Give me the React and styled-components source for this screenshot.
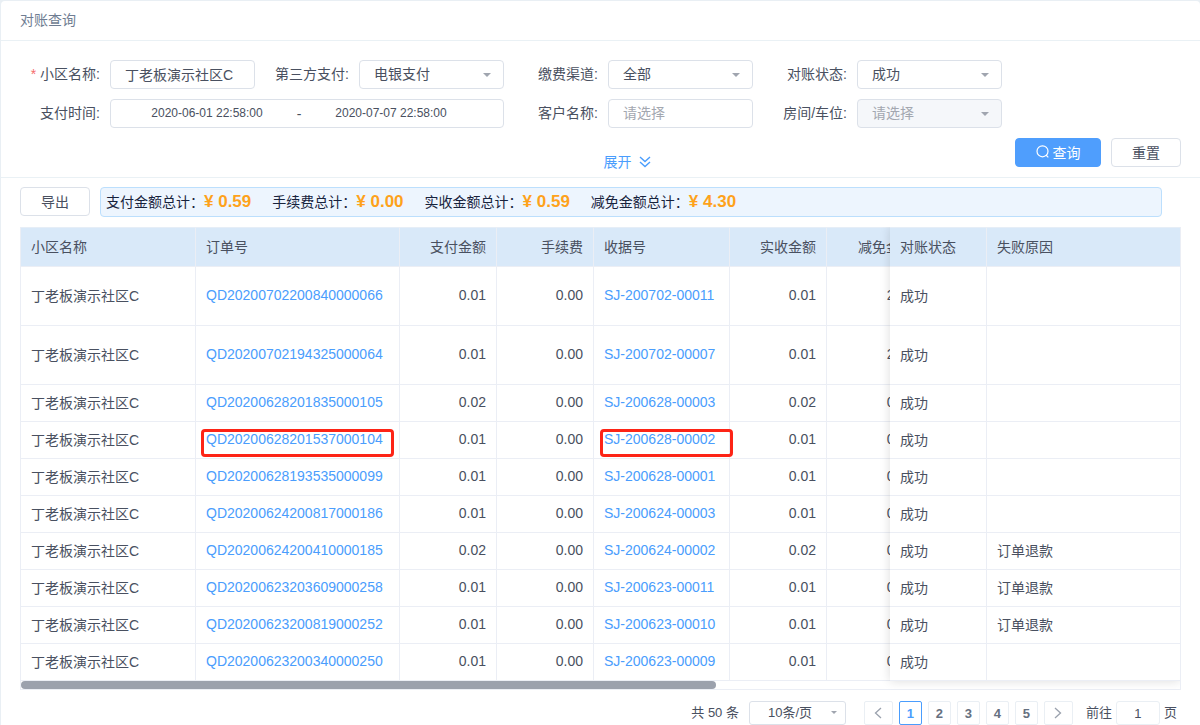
import React from "react";
import styled, { createGlobalStyle, css } from "styled-components";

const Global = createGlobalStyle`
  *, *::before, *::after { box-sizing: border-box; }
  body { margin: 0; background: #e9eff4; }
  body, button, input, select {
    font-family: "Liberation Sans", "Noto Sans CJK SC", sans-serif;
    font-size: 14px;
    color: #495060;
  }
`;

const Card = styled.main`
  margin: 1px 0 0 1px;
  min-height: calc(100vh - 1px);
  background: #fff;
  border-radius: 4px 4px 0 0;
`;

const Header = styled.header`
  height: 40px;
  padding: 0 19px;
  border-bottom: 1px solid #eaf1f5;
`;

const Title = styled.h1`
  margin: 0;
  font-size: 14px;
  font-weight: 400;
  line-height: 38px;
  color: #6f7d92;
`;

const Form = styled.form`
  display: grid;
  gap: 10px;
  padding: 19px 19px 10px 20px;
  border-bottom: 1px solid #eaf1f5;
`;

const Fields = styled.div`
  display: grid;
  grid-template-columns: 234fr 249fr 249fr 249fr 179fr;
  row-gap: 10px;
`;

const Field = styled.div`
  display: flex;
  align-items: center;
  gap: 10px;
  min-width: 0;
  grid-column: span ${(p) => p.$span || 1};
`;

const Label = styled.label`
  flex: none;
  width: ${(p) => (p.$first ? 79 : 94)}px;
  text-align: right;
  line-height: 29px;
  white-space: nowrap;
`;

const Required = styled.span`
  color: #f56c6c;
`;

const controlBox = css`
  height: 29px;
  border: 1px solid #dce1e9;
  border-radius: 4px;
  background: #fff;
`;

const TextInput = styled.input`
  ${controlBox}
  flex: 1;
  width: 100%;
  min-width: 0;
  padding: 0 14px 2px;
  outline: none;
  &::placeholder { color: #a3a7b0; }
`;

const SelectBox = styled.span`
  position: relative;
  display: flex;
  flex: ${(p) => (p.$width ? "none" : 1)};
  width: ${(p) => (p.$width ? p.$width + "px" : "auto")};
  min-width: 0;
`;

const SelectInput = styled.select`
  ${controlBox}
  appearance: none;
  width: 100%;
  padding: 0 24px 1px 14px;
  outline: none;
  opacity: 1;
  ${(p) => p.$small && css`
    height: 24px;
    padding: 0 24px 2px 18px;
    border-radius: 3px;
    font-size: 13px;
  `}
  &:disabled { background: #f5f7fa; color: #a3a7b0; }
`;

const Caret = styled.svg`
  position: absolute;
  right: ${(p) => (p.$small ? 9 : 13)}px;
  top: calc(50% - 2px);
  width: ${(p) => (p.$small ? 6 : 8)}px;
  height: ${(p) => (p.$small ? 3 : 4)}px;
  fill: #a0a5af;
  pointer-events: none;
`;

const DateRange = styled.div`
  ${controlBox}
  flex: 1;
  display: flex;
  align-items: center;
  min-width: 0;
  padding: 0 37px 0 21px;
`;

const DateInput = styled.input`
  flex: 1;
  min-width: 0;
  width: 0;
  padding: 0 0 1px;
  border: 0;
  outline: none;
  background: none;
  font-size: 12px;
  text-align: center;
`;

const Dash = styled.span`
  width: 34px;
  text-align: center;
`;

const FormFooter = styled.div`
  display: grid;
  grid-template-columns: 11fr auto 10fr;
`;

const Expand = styled.button`
  grid-column: 2;
  align-self: end;
  display: flex;
  align-items: center;
  gap: 8px;
  padding: 0;
  border: 0;
  background: none;
  color: #4a9dfd;
  line-height: 20px;
  margin-bottom: -5px;
`;

const Buttons = styled.div`
  display: flex;
  justify-content: flex-end;
  gap: 10px;
`;

const Button = styled.button`
  ${controlBox}
  display: flex;
  flex: none;
  align-items: center;
  justify-content: center;
  gap: 4px;
  width: ${(p) => (p.$primary ? 86 : 70)}px;
  padding: 0 0 2px;
  ${(p) => p.$primary && css`
    color: #fff;
    background: #4f9efd;
    border-color: #4f9efd;
  `}
`;

const Toolbar = styled.div`
  display: flex;
  gap: 10px;
  padding: 9px 38px 10px 19px;
`;

const Summary = styled.dl`
  flex: 1;
  display: flex;
  gap: 21px;
  height: 30px;
  margin: 0;
  padding: 0 5px;
  border: 1px solid #bcdffd;
  border-radius: 4px;
  background: #edf5fe;
  line-height: 28px;
  white-space: nowrap;
`;

const Total = styled.div`
  display: flex;
`;

const TotalName = styled.dt`
  color: #17233d;
  line-height: 29px;
`;

const TotalValue = styled.dd`
  margin: 0;
  font-size: 17px;
  font-weight: 700;
  color: #fea21b;
`;

const TableFrame = styled.section`
  margin: 0 19px;
  border: 1px solid #ebeef5;
  border-top: 0;
`;

const Panes = styled.div`
  display: flex;
`;

const ScrollPane = styled.div`
  flex: 1;
  min-width: 0;
  overflow: hidden;
`;

const FixedPane = styled.div`
  position: relative;
  flex: none;
  width: 290px;
  background: #fff;
  box-shadow: 0 0 10px rgba(0, 0, 0, 0.14);
  clip-path: inset(0 0 -9px -10px);
`;

const Table = styled.table`
  width: ${(p) => p.$width};
  table-layout: fixed;
  border-collapse: separate;
  border-spacing: 0;
`;

const cell = css`
  padding: 0 10px 2px;
  border-right: 1px solid #ebeef5;
  border-bottom: 1px solid #ebeef5;
  text-align: ${(p) => (p.$right ? "right" : "left")};
  white-space: nowrap;
  &:last-child { border-right: 0; }
`;

const Th = styled.th`
  ${cell}
  height: 40px;
  background: #d9e9f9;
  border-top: 1px solid #e6eef7;
  font-weight: 400;
`;

const Td = styled.td`
  ${cell}
  position: relative;
  height: ${(p) => (p.$tall ? 59 : 37)}px;
`;

const CellLink = styled.a`
  color: #4a9dfd;
  text-decoration: none;
`;

const Mark = styled.span`
  position: absolute;
  top: 7px;
  left: ${(p) => (p.$wide ? 6 : 5)}px;
  right: ${(p) => (p.$wide ? -4 : 5)}px;
  height: 28px;
  border: 3px solid #fd2416;
  border-radius: 4px;
  pointer-events: none;
`;

const ScrollTrack = styled.div`
  height: 8px;
`;

const ScrollThumb = styled.div`
  width: 60%;
  height: 8px;
  border-radius: 4px;
  background: #9ba1ad;
`;

const Pagination = styled.nav`
  display: flex;
  justify-content: flex-end;
  align-items: center;
  gap: 6px;
  padding: 11px 23px 0;
  font-size: 13px;
  line-height: 24px;
  white-space: nowrap;
`;

const Count = styled.span`
  margin-right: 4px;
`;

const PageButton = styled.button`
  display: flex;
  align-items: center;
  justify-content: center;
  width: ${(p) => (p.$arrow ? 29 : 23)}px;
  height: 24px;
  padding: 0;
  border: 1px solid ${(p) => (p.$active ? "#4a9dfd" : "#eaeff4")};
  border-radius: 2px;
  background: #fff;
  color: ${(p) => (p.$active ? "#4a9dfd" : "#667080")};
  font-size: 13px;
  font-weight: 700;
`;

const Pages = styled.div`
  display: flex;
  gap: 6px;
  margin: 0 7px 0 12px;
`;

const Jump = styled.label`
  display: flex;
  gap: 4px;
`;

const JumpInput = styled.input`
  width: 44px;
  height: 24px;
  padding: 0;
  border: 1px solid #eaeff4;
  border-radius: 3px;
  outline: none;
  font-size: 13px;
  text-align: center;
`;

function Select({ id, value, placeholder, small, width, disabled, label }) {
  return (
    <SelectBox $width={width}>
      <SelectInput id={id} $small={small} disabled={disabled} aria-label={label}>
        <option>{value || placeholder}</option>
      </SelectInput>
      <Caret $small={small} viewBox="0 0 8 4" aria-hidden="true">
        <path d="M0 0h8L4 4z" />
      </Caret>
    </SelectBox>
  );
}

const totals = [
  ["支付金额总计：", "0.59"],
  ["手续费总计：", "0.00"],
  ["实收金额总计：", "0.59"],
  ["减免金额总计：", "4.30"],
];

const rows = [
  { order: "QD20200702200840000066", pay: "0.01", receipt: "SJ-200702-00011", cut: "2.15", tall: true },
  { order: "QD20200702194325000064", pay: "0.01", receipt: "SJ-200702-00007", cut: "2.15", tall: true },
  { order: "QD20200628201835000105", pay: "0.02", receipt: "SJ-200628-00003", cut: "0.00" },
  { order: "QD20200628201537000104", pay: "0.01", receipt: "SJ-200628-00002", cut: "0.00", marked: true },
  { order: "QD20200628193535000099", pay: "0.01", receipt: "SJ-200628-00001", cut: "0.00" },
  { order: "QD20200624200817000186", pay: "0.01", receipt: "SJ-200624-00003", cut: "0.00" },
  { order: "QD20200624200410000185", pay: "0.02", receipt: "SJ-200624-00002", cut: "0.00", reason: "订单退款" },
  { order: "QD20200623203609000258", pay: "0.01", receipt: "SJ-200623-00011", cut: "0.00", reason: "订单退款" },
  { order: "QD20200623200819000252", pay: "0.01", receipt: "SJ-200623-00010", cut: "0.00", reason: "订单退款" },
  { order: "QD20200623200340000250", pay: "0.01", receipt: "SJ-200623-00009", cut: "0.00" },
];

const columns = [
  { name: "小区名称", width: 175 },
  { name: "订单号", width: 204 },
  { name: "支付金额", width: 97, right: true },
  { name: "手续费", width: 97, right: true },
  { name: "收据号", width: 136 },
  { name: "实收金额", width: 97, right: true },
  { name: "减免金额", width: 97, right: true },
];

export default function App() {
  return (
    <>
      <Global />
      <Card>
        <Header>
          <Title>对账查询</Title>
        </Header>

        <Form onSubmit={(e) => e.preventDefault()}>
          <Fields>
            <Field>
              <Label $first htmlFor="community"><Required>*</Required> 小区名称:</Label>
              <TextInput id="community" defaultValue="丁老板演示社区C" />
            </Field>
            <Field>
              <Label htmlFor="third">第三方支付:</Label>
              <Select id="third" value="电银支付" />
            </Field>
            <Field>
              <Label htmlFor="channel">缴费渠道:</Label>
              <Select id="channel" value="全部" />
            </Field>
            <Field>
              <Label htmlFor="status">对账状态:</Label>
              <Select id="status" value="成功" />
            </Field>
            <span />
            <Field $span={2}>
              <Label $first htmlFor="from">支付时间:</Label>
              <DateRange>
                <DateInput id="from" defaultValue="2020-06-01 22:58:00" />
                <Dash>-</Dash>
                <DateInput aria-label="支付时间" defaultValue="2020-07-07 22:58:00" />
              </DateRange>
            </Field>
            <Field>
              <Label htmlFor="customer">客户名称:</Label>
              <TextInput id="customer" placeholder="请选择" />
            </Field>
            <Field>
              <Label htmlFor="room">房间/车位:</Label>
              <Select id="room" placeholder="请选择" disabled />
            </Field>
          </Fields>
          <FormFooter>
            <Expand type="button">
              展开
              <svg width="12" height="12" viewBox="0 0 12 12" fill="none" stroke="currentColor" strokeWidth="1.4" aria-hidden="true">
                <path d="M1 1l5 4.5L11 1M1 6l5 4.5L11 6" />
              </svg>
            </Expand>
            <Buttons>
              <Button $primary type="submit">
                <svg width="13" height="13" viewBox="0 0 13 13" fill="none" stroke="currentColor" strokeWidth="1.2" aria-hidden="true">
                  <circle cx="6.5" cy="6.3" r="5.5" />
                  <path d="M10 10l2.3 2.3" />
                </svg>
                查询
              </Button>
              <Button type="reset">重置</Button>
            </Buttons>
          </FormFooter>
        </Form>

        <Toolbar>
          <Button type="button">导出</Button>
          <Summary>
            {totals.map(([name, value]) => (
              <Total key={name}>
                <TotalName>{name}</TotalName>
                <TotalValue>¥ {value}</TotalValue>
              </Total>
            ))}
          </Summary>
        </Toolbar>

        <TableFrame>
          <Panes>
            <ScrollPane>
              <Table $width="903px">
                <colgroup>
                  {columns.map((c) => <col key={c.name} width={c.width} />)}
                </colgroup>
                <thead>
                  <tr>
                    {columns.map((c) => <Th key={c.name} $right={c.right}>{c.name}</Th>)}
                  </tr>
                </thead>
                <tbody>
                  {rows.map((r) => (
                    <tr key={r.order}>
                      <Td $tall={r.tall}>丁老板演示社区C</Td>
                      <Td>
                        <CellLink href="#order">{r.order}</CellLink>
                        {r.marked && <Mark />}
                      </Td>
                      <Td $right>{r.pay}</Td>
                      <Td $right>0.00</Td>
                      <Td>
                        <CellLink href="#receipt">{r.receipt}</CellLink>
                        {r.marked && <Mark $wide />}
                      </Td>
                      <Td $right>{r.pay}</Td>
                      <Td $right>{r.cut}</Td>
                    </tr>
                  ))}
                </tbody>
              </Table>
            </ScrollPane>
            <FixedPane>
              <Table $width="100%">
                <colgroup>
                  <col width="97" />
                  <col />
                </colgroup>
                <thead>
                  <tr>
                    <Th>对账状态</Th>
                    <Th>失败原因</Th>
                  </tr>
                </thead>
                <tbody>
                  {rows.map((r) => (
                    <tr key={r.order}>
                      <Td $tall={r.tall}>成功</Td>
                      <Td>{r.reason}</Td>
                    </tr>
                  ))}
                </tbody>
              </Table>
            </FixedPane>
          </Panes>
          <ScrollTrack>
            <ScrollThumb />
          </ScrollTrack>
        </TableFrame>

        <Pagination aria-label="分页">
          <Count>共 50 条</Count>
          <Select small width={97} value="10条/页" label="每页条数" />
          <Pages>
            <PageButton $arrow aria-label="上一页">
              <svg width="8" height="12" viewBox="0 0 8 12" fill="none" stroke="#9aa1ad" strokeWidth="1.3" aria-hidden="true">
                <path d="M7 1L1.5 6L7 11" />
              </svg>
            </PageButton>
            {[1, 2, 3, 4, 5].map((n) => (
              <PageButton key={n} $active={n === 1}>{n}</PageButton>
            ))}
            <PageButton $arrow aria-label="下一页">
              <svg width="8" height="12" viewBox="0 0 8 12" fill="none" stroke="#9aa1ad" strokeWidth="1.3" aria-hidden="true">
                <path d="M1 1L6.5 6L1 11" />
              </svg>
            </PageButton>
          </Pages>
          <Jump>
            前往
            <JumpInput defaultValue="1" />
            页
          </Jump>
        </Pagination>
      </Card>
    </>
  );
}
